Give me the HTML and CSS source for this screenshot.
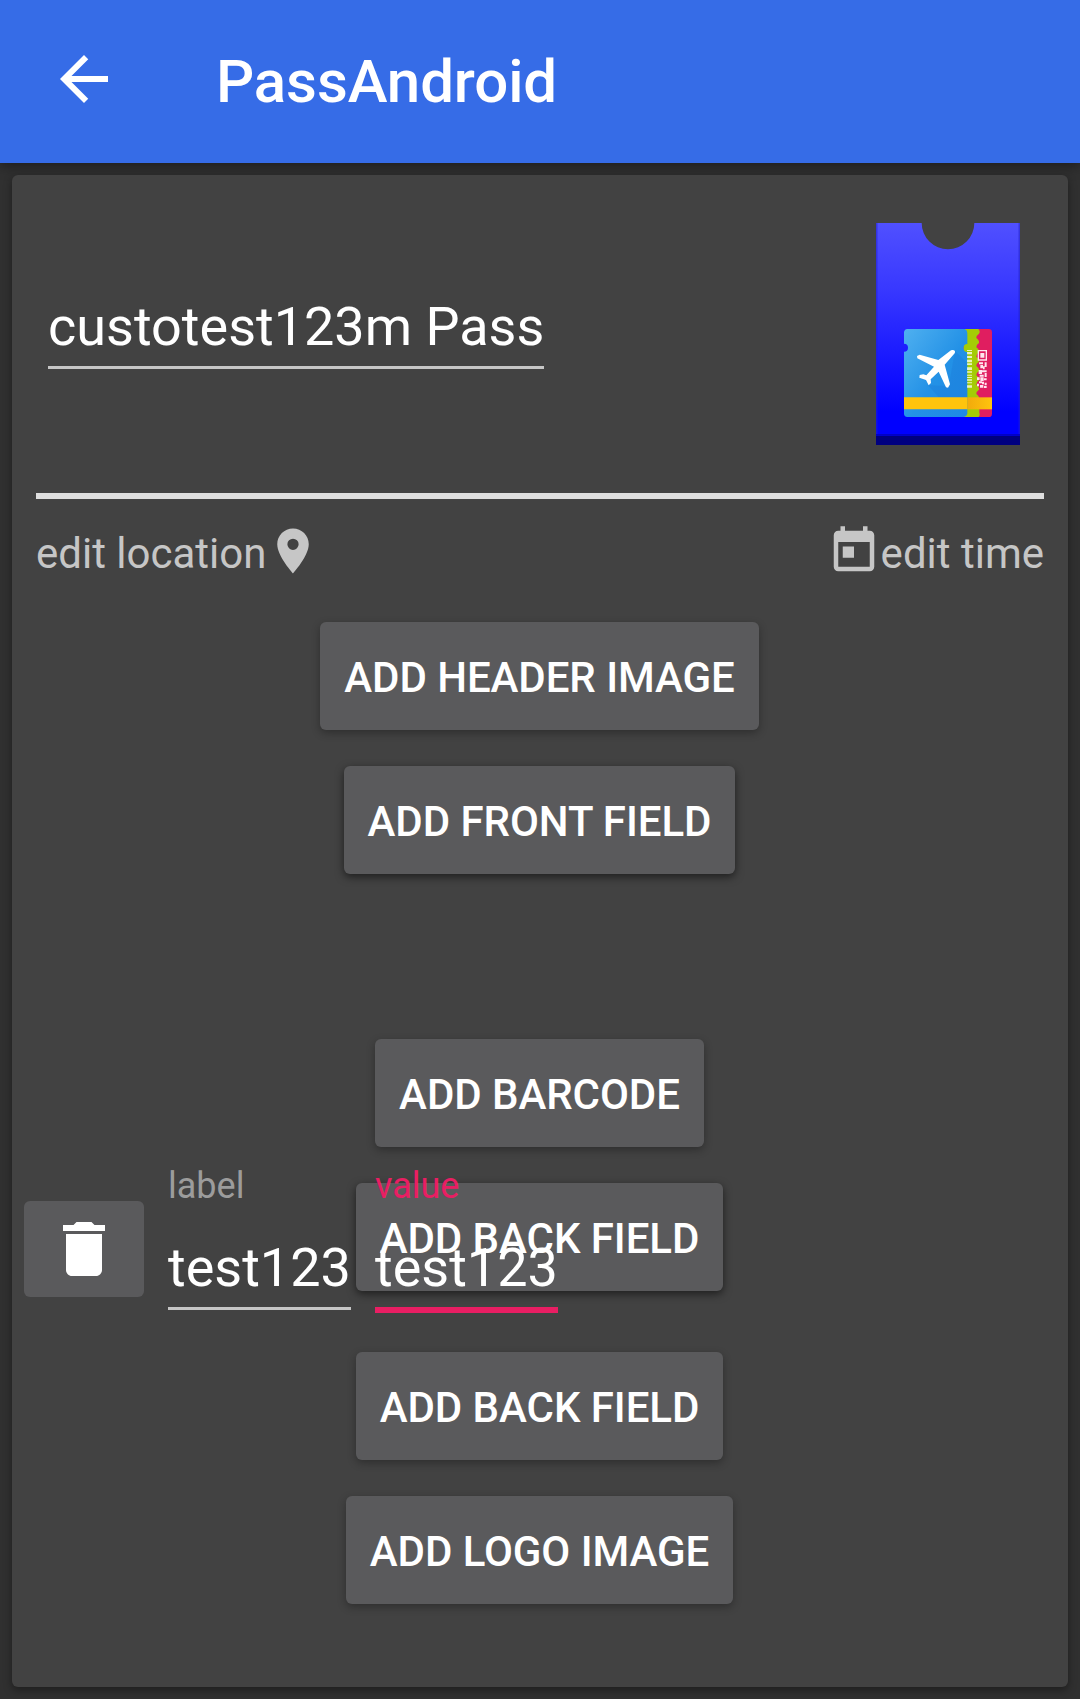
FILE: index.html
```html
<!DOCTYPE html>
<html lang="en">
<head>
<meta charset="utf-8">
<title>PassAndroid</title>
<link rel="stylesheet" href="styles.css">
</head>
<body>
<header class="app-bar">
  <svg class="back-icon" viewBox="0 0 24 24"><path d="M20 11H7.83l5.59-5.59L12 4l-8 8 8 8 1.41-1.41L7.83 13H20v-2z"/></svg>
  <h1 class="app-title">PassAndroid</h1>
</header>
<main class="card">
  <section class="pass-head">
    <div class="field name-field">custotest123m Pass</div>
    <svg class="pass-icon" viewBox="0 0 432 666">
      <defs>
        <linearGradient id="sleeve" x1="0" y1="0" x2="0" y2="1">
          <stop offset="0" stop-color="#5050ff"/>
          <stop offset=".3" stop-color="#3838ff"/>
          <stop offset=".85" stop-color="#0000ff"/>
        </linearGradient>
        <linearGradient id="ticket" x1="0" y1="0" x2="1" y2="1">
          <stop offset="0" stop-color="#4fb0f0"/>
          <stop offset=".55" stop-color="#2391e6"/>
          <stop offset="1" stop-color="#1e88e5"/>
        </linearGradient>
        <linearGradient id="band" x1="0" y1="0" x2="1" y2="0">
          <stop offset="0" stop-color="#f2aa0c"/>
          <stop offset="1" stop-color="#ffc40d"/>
        </linearGradient>
      </defs>
      <path fill="url(#sleeve)" d="M0 0H137A79 79 0 0 0 295 0H432V666H0z"/>
      <path fill="none" stroke="#2020c8" stroke-opacity=".55" stroke-width="5" d="M2 0V634M430 0V634"/>
      <path fill="#000080" d="M0 638H432V666H0z"/>
      <path fill="#0000c8" d="M0 633H432V638H0z"/>
      <rect x="240" y="318" width="108" height="264" rx="10" fill="#e01e60"/>
      <path fill="#a4cc06" d="M264 318H307Q314 326 309 332Q300 338 301 345Q311 352 309 360Q300 366 301 373Q311 380 309 388Q300 394 301 401Q311 408 309 416Q300 422 301 429Q311 436 309 444Q300 450 301 457Q311 464 309 472Q300 478 301 485Q311 492 309 500Q300 506 301 513Q311 520 309 528Q307 534 310 538V568Q313 575 308 582H264z"/>
      <path fill="url(#ticket)" d="M94 318H266Q274 321 274 330V364A11 11 0 0 0 274 386V572Q272 580 264 582H94Q84 581 84 572V386A12 12 0 0 0 84 362V328Q85 319 94 318z"/>
      <path fill="#a4cc06" d="M275 363A12 12 0 0 0 275 387z"/>
      <path fill="#176fd0" opacity=".22" d="M237 383L274 420V523H188L155 486L218 490z"/>
      <path fill="#ffc40d" d="M84 523H274V559H84z"/>
      <path fill="url(#band)" d="M274 523H348V559H274z"/>
      <path fill="#fff" d="M230 381Q240 382 236 391L206 425L222 484L216 494L210 493L188 446L164 469L165 480L158 487L150 471L130 464L131 456L142 454L151 457L174 431L124 406L123 399L131 395L187 411L222 384Q226 380 230 381z"/>
      <path fill="#fff" opacity=".75" d="M273 381h15v3h-15zM273 387h15v7h-15zM273 399h15v6h-15zM273 410h15v8h-15zM273 421h15v5h-15zM273 433h15v8h-15zM273 445h15v4h-15zM273 455h15v3h-15zM273 462h15v3h-15zM273 469h15v4h-15zM273 478h15v3h-15zM273 487h15v7h-15z"/>
      <path fill="none" stroke="#ffe6ee" stroke-width="4" d="M307 383H331V411H307z"/>
      <path fill="#ffe6ee" d="M313 390h12v14h-12zM309 418h12v6h-12zM326 418h6v14h-6zM313 426h8v10h-8zM321 430h5v9h-5zM308 441h10v12h-10zM318 442h14v6h-14zM326 450h6v12h-6zM311 455h12v6h-12zM303 463h8v8h-8zM313 463h10v11h-10zM324 466h8v6h-8zM309 475h9v6h-9zM303 482h6v8h-6zM318 476h6v8h-6zM326 479h6v8h-6zM312 486h10v8h-10zM324 489h8v6h-8z"/>
    </svg>
  </section>
  <hr class="divider">
  <section class="meta">
    <div class="meta-item"><span>edit location</span><svg class="meta-icon" viewBox="0 0 24 24"><path d="M12 2C8.13 2 5 5.13 5 9c0 5.25 7 13 7 13s7-7.75 7-13c0-3.87-3.13-7-7-7zm0 9.5a2.5 2.5 0 0 1 0-5 2.5 2.5 0 0 1 0 5z"/></svg></div>
    <div class="meta-item"><svg class="meta-icon" viewBox="0 0 24 24"><path d="M19 3h-1V1h-2v2H8V1H6v2H5c-1.11 0-2 .9-2 2v14c0 1.1.89 2 2 2h14c1.1 0 2-.9 2-2V5c0-1.1-.9-2-2-2zm0 16H5V8h14v11zM7 10h5v5H7z"/></svg><span>edit time</span></div>
  </section>
  <section class="actions">
    <button class="btn">ADD HEADER IMAGE</button>
    <button class="btn btn-raised">ADD FRONT FIELD</button>
    <button class="btn btn-barcode">ADD BARCODE</button>
    <div class="back-fields">
      <button class="btn btn-raised">ADD BACK FIELD</button>
      <div class="entry">
        <button class="delete"><svg class="delete-icon" viewBox="0 0 24 24"><path d="M6 19c0 1.1.9 2 2 2h8c1.1 0 2-.9 2-2V7H6v12zM19 4h-3.5l-1-1h-5l-1 1H5v2h14V4z"/></svg></button>
        <div class="entry-col"><span class="caption">label</span><div class="field entry-field">test123</div></div>
        <div class="entry-col"><span class="caption caption-active">value</span><div class="field entry-field field-active">test123</div></div>
      </div>
    </div>
    <button class="btn btn-back">ADD BACK FIELD</button>
    <button class="btn">ADD LOGO IMAGE</button>
  </section>
</main>
</body>
</html>
```

FILE: styles.css
```css
* { box-sizing: border-box; }

body {
  margin: 0;
  height: 1699px;
  overflow: hidden;
  display: flex;
  flex-direction: column;
  background: #303030;
  color: #fff;
  font-family: Roboto, sans-serif;
}

.app-bar {
  height: 163px;
  flex: none;
  display: flex;
  align-items: center;
  gap: 96px;
  padding: 0 48px 5px;
  background: #366ce7;
  box-shadow: 0 3px 12px rgba(0, 0, 0, .4);
}
.back-icon { width: 72px; height: 72px; fill: #fff; }
.app-title {
  margin: 0;
  padding-top: 5px;
  font-size: 60px;
  font-weight: 500;
  letter-spacing: -0.1px;
  line-height: 70px;
}

.card {
  height: 1512px;
  flex: none;
  margin: 12px 12px 0;
  border-radius: 6px;
  background: #424242;
  box-shadow: 0 3px 9px rgba(0, 0, 0, .4);
}

.pass-head {
  height: 318px;
  display: flex;
  align-items: center;
  justify-content: space-between;
  padding: 0 48px 0 36px;
}
.pass-icon { width: 144px; height: 222px; }

.field {
  border-bottom: 3px solid #c6c6c6;
  padding-bottom: 12px;
  font-size: 54px;
  line-height: 55px;
  white-space: nowrap;
}
.name-field { width: 496px; }

.divider {
  height: 6px;
  margin: 0 24px;
  border: 0;
  background: #dedede;
}

.meta {
  display: flex;
  justify-content: space-between;
  padding: 25px 24px 0;
  color: #c6c6c6;
  font-size: 42px;
  line-height: 60px;
}
.meta-item { display: flex; }
.meta-icon { width: 54px; height: 54px; fill: #c6c6c6; }

.actions {
  display: flex;
  flex-direction: column;
  align-items: center;
  gap: 36px;
  padding: 38px 1px 0 0;
}
.btn {
  height: 108px;
  padding: 3px 24px 0;
  border: 0;
  border-radius: 6px;
  background: #5a5a5c;
  box-shadow: 0 3px 8px rgba(0, 0, 0, .3);
  color: #fff;
  font: 500 42px/50px Roboto, sans-serif;
  letter-spacing: -0.06px;
  white-space: nowrap;
}
.btn-raised { box-shadow: 0 3px 8px rgba(0, 0, 0, .55); }
.btn-barcode { margin-top: 129px; }
.btn-back { margin-top: 25px; }

.back-fields {
  align-self: stretch;
  position: relative;
  display: flex;
  justify-content: center;
}
/* The field row floats over the button underneath it. */
.entry {
  position: absolute;
  top: -22px;
  left: 12px;
  display: flex;
  gap: 24px;
}
.delete {
  width: 120px;
  height: 96px;
  margin-top: 40px;
  padding: 0;
  border: 0;
  border-radius: 6px;
  background: #5a5a5c;
}
.delete-icon { display: block; width: 72px; height: 72px; margin: 0 auto; fill: #fff; }
.entry-col { width: 183px; }
.caption {
  display: block;
  height: 79px;
  padding-top: 1px;
  color: #9c9c9c;
  font-size: 36px;
  line-height: 48px;
}
.caption-active { color: #e91e63; }
.field-active { border-bottom: 6px solid #e91e63; }
```
